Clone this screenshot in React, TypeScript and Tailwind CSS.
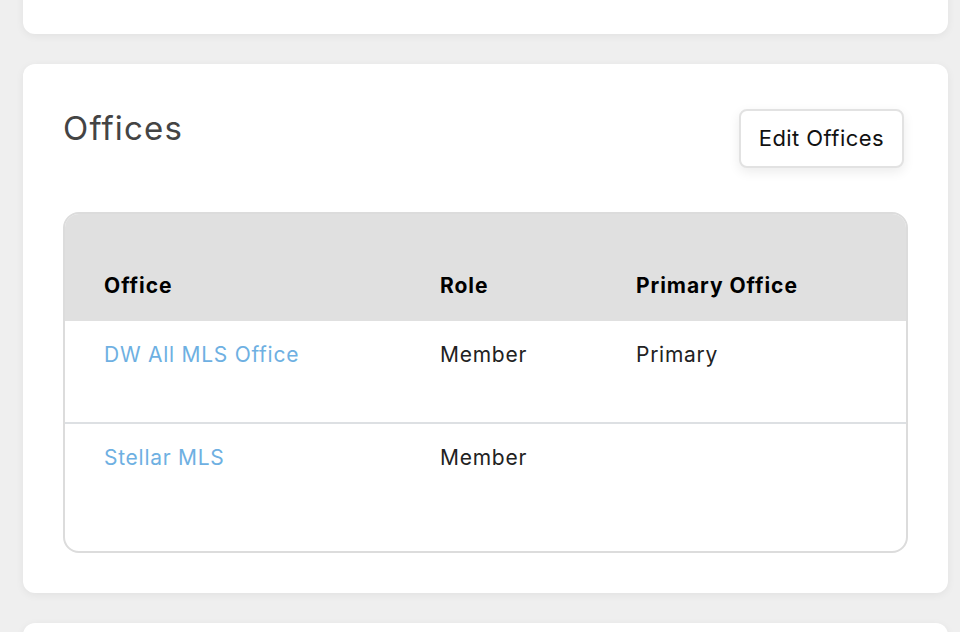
const offices = [
  { name: 'DW All MLS Office', role: 'Member', primary: 'Primary' },
  { name: 'Stellar MLS', role: 'Member', primary: '' },
];

// Offices card shown between other profile cards
const App = () => {
  return (
    <div className="min-h-screen h-[632px] overflow-hidden bg-[#efefef] pl-[23px] pr-[12px] font-['Inter',sans-serif]">
      <div className="-mt-[40px] h-[74px] rounded-[12px] bg-white shadow-[0_2px_8px_rgba(0,0,0,0.06)]" />

      <div className="mt-[30px] rounded-[12px] bg-white px-[40px] pt-[43px] pb-[40px] shadow-[0_2px_8px_rgba(0,0,0,0.06)]">
        <div className="flex items-start justify-between">
          <h2 className="pt-[1px] text-[33px] leading-[40px] font-normal tracking-[0.035em] text-[#444]">Offices</h2>
          <button className="mt-[2px] mr-[4px] h-[59px] rounded-[8px] border-2 border-[#e2e2e2] bg-white px-[18px] text-[22px] tracking-[0.02em] text-[#111] shadow-[0_4px_12px_rgba(0,0,0,0.08)]">
            Edit Offices
          </button>
        </div>

        <div className="mt-[44px] overflow-hidden rounded-[16px] border-2 border-[#dcdcdc] pb-[24px]">
          <div className="grid grid-cols-[336px_196px_1fr] bg-[#e0e0e0] pl-[39px] pt-[59px] pb-[22px] text-[21px] leading-[26px] font-bold tracking-[0.045em] text-black">
            <div>Office</div>
            <div>Role</div>
            <div>Primary Office</div>
          </div>
          {offices.map((o, i) => (
            <div
              key={o.name}
              className={`grid h-[103px] grid-cols-[336px_196px_1fr] pl-[39px] pt-[21px] text-[21px] leading-[26px] tracking-[0.035em] text-[#222] ${i === 0 ? 'border-b-2 border-[#dde0e3]' : ''}`}
            >
              <div className="text-[#6eb0e2]">{o.name}</div>
              <div>{o.role}</div>
              <div>{o.primary}</div>
            </div>
          ))}
        </div>
      </div>

      <div className="mt-[30px] h-[80px] rounded-[12px] bg-white shadow-[0_2px_8px_rgba(0,0,0,0.06)]" />
    </div>
  );
};

export default App;
